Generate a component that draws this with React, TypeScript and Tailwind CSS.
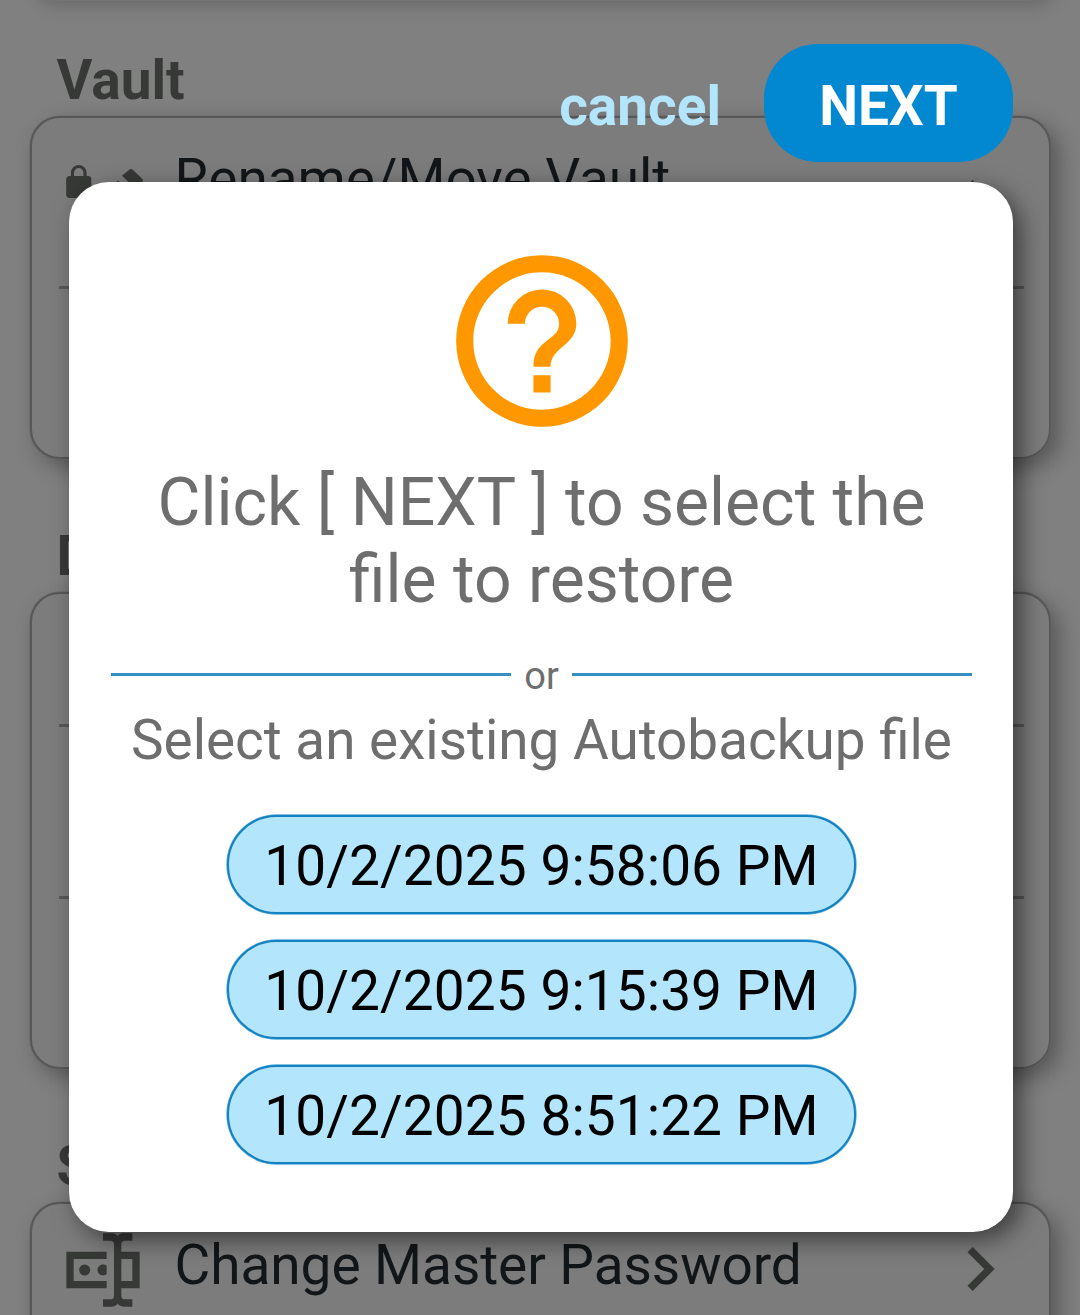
import type { ReactNode } from "react";

const backups = ["10/2/2025 9:58:06 PM", "10/2/2025 9:15:39 PM", "10/2/2025 8:51:22 PM"];

function ChevronIcon() {
  return (
    <svg viewBox="0 0 24 24" className="size-[88px] shrink-0 fill-[#373937]">
      <path d="M8.59,16.58L13.17,12L8.59,7.41L10,6L16,12L10,18L8.59,16.58Z" />
    </svg>
  );
}

function VaultEditIcon() {
  return (
    <svg viewBox="0 0 88 88" className="size-[88px] shrink-0 fill-[#373937]">
      <path
        transform="translate(0.9 5.4) scale(1.57)"
        d="M18,8A2,2 0 0,1 20,10V20A2,2 0 0,1 18,22H6A2,2 0 0,1 4,20V10C4,8.89 4.9,8 6,8H7V6A5,5 0 0,1 12,1A5,5 0 0,1 17,6V8H18M12,3A3,3 0 0,0 9,6V8H15V6A3,3 0 0,0 12,3Z"
      />
      <path d="M70.5,11.4Q72,10.4 73.5,11.4L83.4,21Q84.6,22.5 83.4,24L77,31L63,17.8Z" />
      <path d="M59,22.6L73,36L45,64H31V50Z" />
    </svg>
  );
}

function PasswordIcon() {
  return (
    <svg viewBox="0 0 24 24" className="size-[88px] shrink-0 fill-[#373937]">
      <path d="M17,7H22V17H17V19A1,1 0 0,0 18,20H20V22H17.5C16.95,22 16,21.55 16,21C16,21.55 15.05,22 14.5,22H12V20H14A1,1 0 0,0 15,19V5A1,1 0 0,0 14,4H12V2H14.5C15.05,2 16,2.45 16,3C16,2.45 16.95,2 17.5,2H20V4H18A1,1 0 0,0 17,5V7M2,7H13V9H4V15H13V17H2V7M20,15V9H17V15H20M8.5,12A1.5,1.5 0 0,0 7,10.5A1.5,1.5 0 0,0 5.5,12A1.5,1.5 0 0,0 7,13.5A1.5,1.5 0 0,0 8.5,12M13,10.89C12.39,10.33 11.44,10.38 10.88,11C10.32,11.6 10.37,12.55 11,13.11C11.55,13.63 12.43,13.63 13,13.11V10.89Z" />
    </svg>
  );
}

function HelpIcon() {
  return (
    <svg viewBox="0 0 24 24" className="size-[206px] shrink-0 fill-[#ff9800]">
      <path d="M11,18H13V16H11V18M12,2A10,10 0 0,0 2,12A10,10 0 0,0 12,22A10,10 0 0,0 22,12A10,10 0 0,0 12,2M12,20C7.59,20 4,16.41 4,12C4,7.59 7.59,4 12,4C16.41,4 20,7.59 20,12C20,16.41 16.41,20 12,20M12,6A4,4 0 0,0 8,10H10A2,2 0 0,1 12,8A2,2 0 0,1 14,10C14,12 11,11.75 11,15H13C13,12.75 16,12.5 16,10A4,4 0 0,0 12,6Z" />
    </svg>
  );
}

function SectionTitle({ children }: { children: ReactNode }) {
  return (
    <h2 className="ml-[56.5px] h-16 text-[55px] leading-[64px] font-bold text-[#373937]">{children}</h2>
  );
}

const card =
  "mr-[29px] ml-[30px] mt-[4px] shrink-0 rounded-[30px] border-2 border-[#585858] bg-[#7c7c7c] pr-[25px] pl-[27px] shadow-[0_0_0_0.6px_#6a6a6a,8px_8px_22px_rgba(0,0,0,0.33)]";

const rowLabel =
  "mt-[29px] ml-[27.5px] grow text-[55px] leading-[64px] tracking-[-0.07px] whitespace-nowrap text-[#131618]";

function Settings() {
  return (
    <div className="flex h-full flex-col">
      <div className="mx-[30px] -mt-10 h-[41px] shrink-0 rounded-[30px] bg-[#747474] shadow-[6px_4px_18px_rgba(0,0,0,0.2)]" />
      <div className="mt-[47px]">
        <SectionTitle>Vault</SectionTitle>
      </div>
      <section className={`${card} h-[343px]`}>
        <div className="flex h-[171px] border-b-[3px] border-[#585858]">
          <div className="mt-[40px]">
            <VaultEditIcon />
          </div>
          <span className={rowLabel}>Rename/Move Vault</span>
          <div className="mt-[40px]">
            <ChevronIcon />
          </div>
        </div>
      </section>
      <div className="mt-[65px]">
        <SectionTitle>Data</SectionTitle>
      </div>
      <section className={`${card} h-[477px]`}>
        <div className="h-[133px] border-b-[3px] border-[#585858]" />
        <div className="h-[172px] border-b-[3px] border-[#585858]" />
      </section>
      <div className="mt-[65px]">
        <SectionTitle>Security</SectionTitle>
      </div>
      <section className={`${card} h-[201px]`}>
        <div className="flex items-start">
          <div className="mt-[22px]">
            <PasswordIcon />
          </div>
          <span className={rowLabel}>Change Master Password</span>
          <div className="mt-[21px]">
            <ChevronIcon />
          </div>
        </div>
      </section>
    </div>
  );
}

function RestoreDialog() {
  return (
    <div className="absolute inset-0 flex flex-col pr-[67px] pl-[69px]">
      <div className="mt-[44px] flex h-[118px] shrink-0 items-center justify-end">
        <button className="pt-[6px] pr-[43px] text-[55px] leading-[64px] font-bold text-[#b3e5fc]">cancel</button>
        <button className="h-[118px] w-[249px] rounded-[54px] bg-[#0288d1] pt-[5px] text-[55px] leading-[64px] font-bold text-white">
          NEXT
        </button>
      </div>
      <div className="mt-5 flex h-[1050px] shrink-0 flex-col items-center rounded-[40px] bg-white pr-[41px] pl-[42px] pt-[56px] text-[#6e6e6e] shadow-[8px_8px_23px_rgba(0,0,0,0.5)]">
        <div className="pl-px">
          <HelpIcon />
        </div>
        <p className="mt-5 text-center text-[66px] leading-[77px] whitespace-nowrap">
          Click [ NEXT ] to select the
          <br />
          file to restore
        </p>
        <div className="mt-[34px] flex h-[44px] w-full items-center gap-[13px] text-[38px] leading-[44px]">
          <div className="h-[3px] grow bg-[#3390c1]" />
          <span className="pt-[4px]">or</span>
          <div className="h-[3px] grow bg-[#3390c1]" />
        </div>
        <p className="mt-[12px] text-[54.85px] leading-[64px] whitespace-nowrap">
          Select an existing Autobackup file
        </p>
        <div className="mt-[43px] flex flex-col gap-[26px]">
          {backups.map((label) => (
            <button
              key={label}
              className="h-[99px] w-[629px] rounded-[50px] border-2 border-[#1482c0] bg-[#b3e5fc] pt-[2px] text-[55px] leading-[64px] tracking-[0.07px] whitespace-nowrap text-black shadow-[0_0_0_0.7px_#5fb0dc]"
            >
              {label}
            </button>
          ))}
        </div>
      </div>
    </div>
  );
}

export default function App() {
  return (
    <main className="relative h-[1315px] w-[1080px] overflow-hidden bg-[#808080] font-[Roboto,sans-serif]">
      <Settings />
      <RestoreDialog />
    </main>
  );
}
